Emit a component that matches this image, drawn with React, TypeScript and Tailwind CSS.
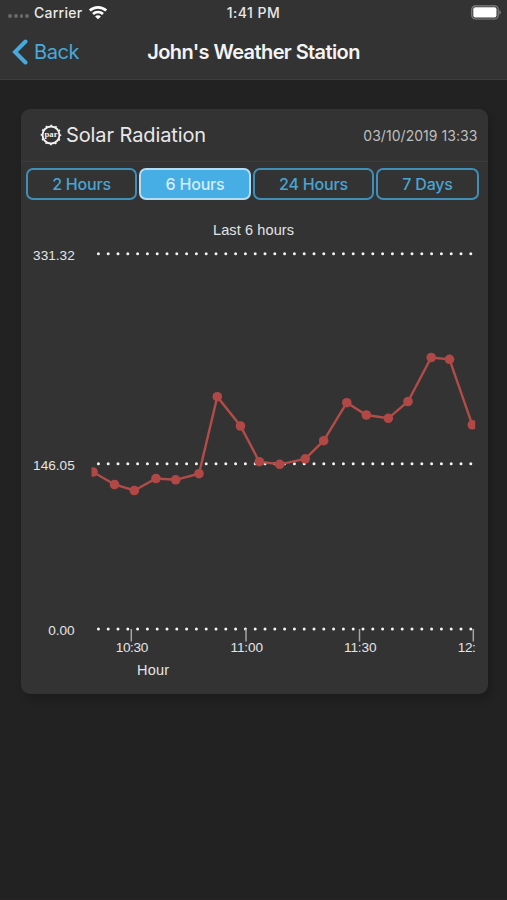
import clsx from "clsx";

const ranges = [
  { label: "2 Hours", width: "w-[111px]" },
  { label: "6 Hours", width: "w-[112px]" },
  { label: "24 Hours", width: "w-[121px]" },
  { label: "7 Days", width: "w-[103px]" },
];

// Readings in chart units, origin at the top left of the chart
const points = [
  [72, 269],
  [93.5, 281.5],
  [113.3, 287.5],
  [135, 275.5],
  [154.7, 276.8],
  [178, 270.7],
  [196.3, 193.7],
  [219.5, 223],
  [238.3, 258.7],
  [258.7, 261.3],
  [284.2, 255.8],
  [302.7, 237.7],
  [325.8, 199.7],
  [345.3, 212],
  [367.3, 215.3],
  [387, 198.5],
  [410.2, 154.5],
  [428.5, 156.3],
  [451.3, 221.8],
];

const levels = [
  { label: "331.32", y: 50.7 },
  { label: "146.05", y: 260.8 },
  { label: "0.00", y: 426 },
];

const ticks = [
  { label: "10:30", x: 110.3 },
  { label: "11:00", x: 225 },
  { label: "11:30", x: 338.5 },
  { label: "12:00", x: 452.3 },
];

function WifiIcon() {
  return (
    <svg className="ml-[6px] h-[15px] w-[20px]" viewBox="0 0 20 15" fill="none" stroke="white" strokeWidth="2.7">
      <path d="M1.8 5.6C6.4 1.2 13.6 1.2 18.2 5.6" />
      <path d="M5 9C7.8 6.3 12.2 6.3 15 9" />
      <path d="M10 14.3L7.1 11.4C8.7 10 11.3 10 12.9 11.4Z" fill="white" stroke="none" />
    </svg>
  );
}

function StatusBar() {
  return (
    <div className="grid h-[25px] grid-cols-3 items-center text-[14px] font-medium text-[#e8e8e8]">
      <div className="flex items-center pl-[8px]">
        <div className="mt-[7px] mr-[5px] flex gap-[2px]">
          {[0, 1, 2, 3].map((i) => (
            <span key={i} className="size-[3.75px] rounded-full bg-[#6a6a6a]" />
          ))}
        </div>
        <span className="tracking-[0.25px]">Carrier</span>
        <WifiIcon />
      </div>
      <span className="text-center tracking-[0.5px]">1:41 PM</span>
      <div className="flex justify-end pr-[6px]">
        <svg width="30" height="15" viewBox="0 0 30 15">
          <rect x="0.8" y="0.8" width="26.4" height="13.2" rx="3.6" fill="none" stroke="#858585" strokeWidth="1.2" />
          <rect x="2.3" y="2.3" width="23.2" height="10.2" rx="2" fill="white" />
          <path d="M28.4 5.3C30.2 6 30.2 8.8 28.4 9.5Z" fill="#858585" />
        </svg>
      </div>
    </div>
  );
}

function ParIcon() {
  return (
    <svg className="size-[22px]" viewBox="0 0 22 22">
      <circle cx="11" cy="11" r="8.5" fill="none" stroke="#f2f2f2" strokeWidth="1.9" />
      <circle
        cx="11"
        cy="11"
        r="9.6"
        fill="none"
        stroke="#f2f2f2"
        strokeWidth="1.4"
        strokeDasharray="1.8 3.227"
        strokeDashoffset="0.9"
      />
      <text
        x="11"
        y="13"
        textAnchor="middle"
        textLength="13"
        lengthAdjust="spacingAndGlyphs"
        className="fill-[#f2f2f2] font-['Liberation_Serif',serif] text-[8px] font-bold"
      >
        par
      </text>
    </svg>
  );
}

function RadiationChart() {
  return (
    <svg
      className="mt-[3px] block h-[489px] w-[467px] font-['Liberation_Sans',sans-serif] text-[13.6px]"
      viewBox="0 0 467 489"
      fill="#e4e4e4"
    >
      <defs>
        <clipPath id="plot">
          <rect x="70.5" y="0" width="383.7" height="489" />
        </clipPath>
      </defs>

      <text x="232.5" y="32" textAnchor="middle" textLength="81" className="text-[14.5px]">
        Last 6 hours
      </text>

      {levels.map(({ label, y }) => (
        <g key={label}>
          <text x="53.7" y={y + 6.2} textAnchor="end">
            {label}
          </text>
          <line
            x1="77.4"
            x2="451"
            y1={y}
            y2={y}
            stroke="#f4f4f4"
            strokeWidth="3"
            strokeLinecap="round"
            strokeDasharray="0.01 9.79"
          />
        </g>
      ))}

      <g clipPath="url(#plot)">
        {ticks.map(({ label, x }) => (
          <g key={label}>
            <line x1={x} x2={x} y1="426" y2="438.5" stroke="#a4a4a8" strokeWidth="1.5" />
            <text x={x + 0.7} y="449.2" textAnchor="middle" textLength="32.5">
              {label}
            </text>
          </g>
        ))}
        <polyline
          points={points.map((p) => p.join(",")).join(" ")}
          fill="none"
          stroke="#b14c49"
          strokeWidth="2.4"
        />
        {points.map(([x, y]) => (
          <circle key={x} cx={x} cy={y} r="4.8" fill="#b14846" />
        ))}
      </g>

      <text x="132" y="472" textAnchor="middle" textLength="32" className="text-[14.5px]">
        Hour
      </text>
    </svg>
  );
}

export default function App() {
  return (
    <div className="h-[900px] w-[507px] overflow-hidden border-b border-[#2b2228] bg-[#222222] font-['Inter',sans-serif]">
      <header className="h-[80px] border-b border-[#3d3f3f] bg-[#333333]">
        <StatusBar />
        <nav className="grid h-[53px] grid-cols-[120px_1fr_120px] items-center">
          <button className="flex items-center gap-[6px] pl-[12px] text-[20px] tracking-[-0.4px] text-[#48a9dc]">
            <svg width="16" height="26" viewBox="0 0 16 26" fill="none" stroke="currentColor" strokeWidth="4">
              <path d="M13.5 2.5L3 13L13.5 23.5" strokeLinecap="round" />
            </svg>
            Back
          </button>
          <h1 className="text-center text-[20px] font-semibold tracking-[-0.6px] whitespace-nowrap text-[#f4f4f4]">
            John's Weather Station
          </h1>
        </nav>
      </header>

      <main className="pt-[29px] pl-[21px]">
        <section className="h-[585px] w-[467px] rounded-[9px] bg-[#333333] shadow-[3px_5px_9px_rgba(0,0,0,0.2)]">
          <div className="flex h-[53px] items-center justify-between border-b border-[#3b3b3b] pr-[10.5px] pl-[19px]">
            <div className="flex items-center gap-[4px]">
              <ParIcon />
              <h2 className="text-[20px] tracking-[-0.1px] text-[#e8e8e8]">Solar Radiation</h2>
            </div>
            <time className="text-[14px] tracking-[0.05px] text-[#bfbfbf]">03/10/2019 13:33</time>
          </div>

          <div className="flex gap-[2px] pt-[6px] pl-[5px]">
            {ranges.map(({ label, width }) => (
              <button
                key={label}
                className={clsx(
                  "h-[32px] rounded-[7px] border-2 text-[16px] font-medium tracking-[-0.2px]",
                  width,
                  label === "6 Hours"
                    ? "border-[#b4dcf2] bg-[#46aee5] text-[#d5edfa]"
                    : "border-[#3f8fb8] text-[#48a5d5]"
                )}
              >
                {label}
              </button>
            ))}
          </div>

          <RadiationChart />
        </section>
      </main>
    </div>
  );
}
